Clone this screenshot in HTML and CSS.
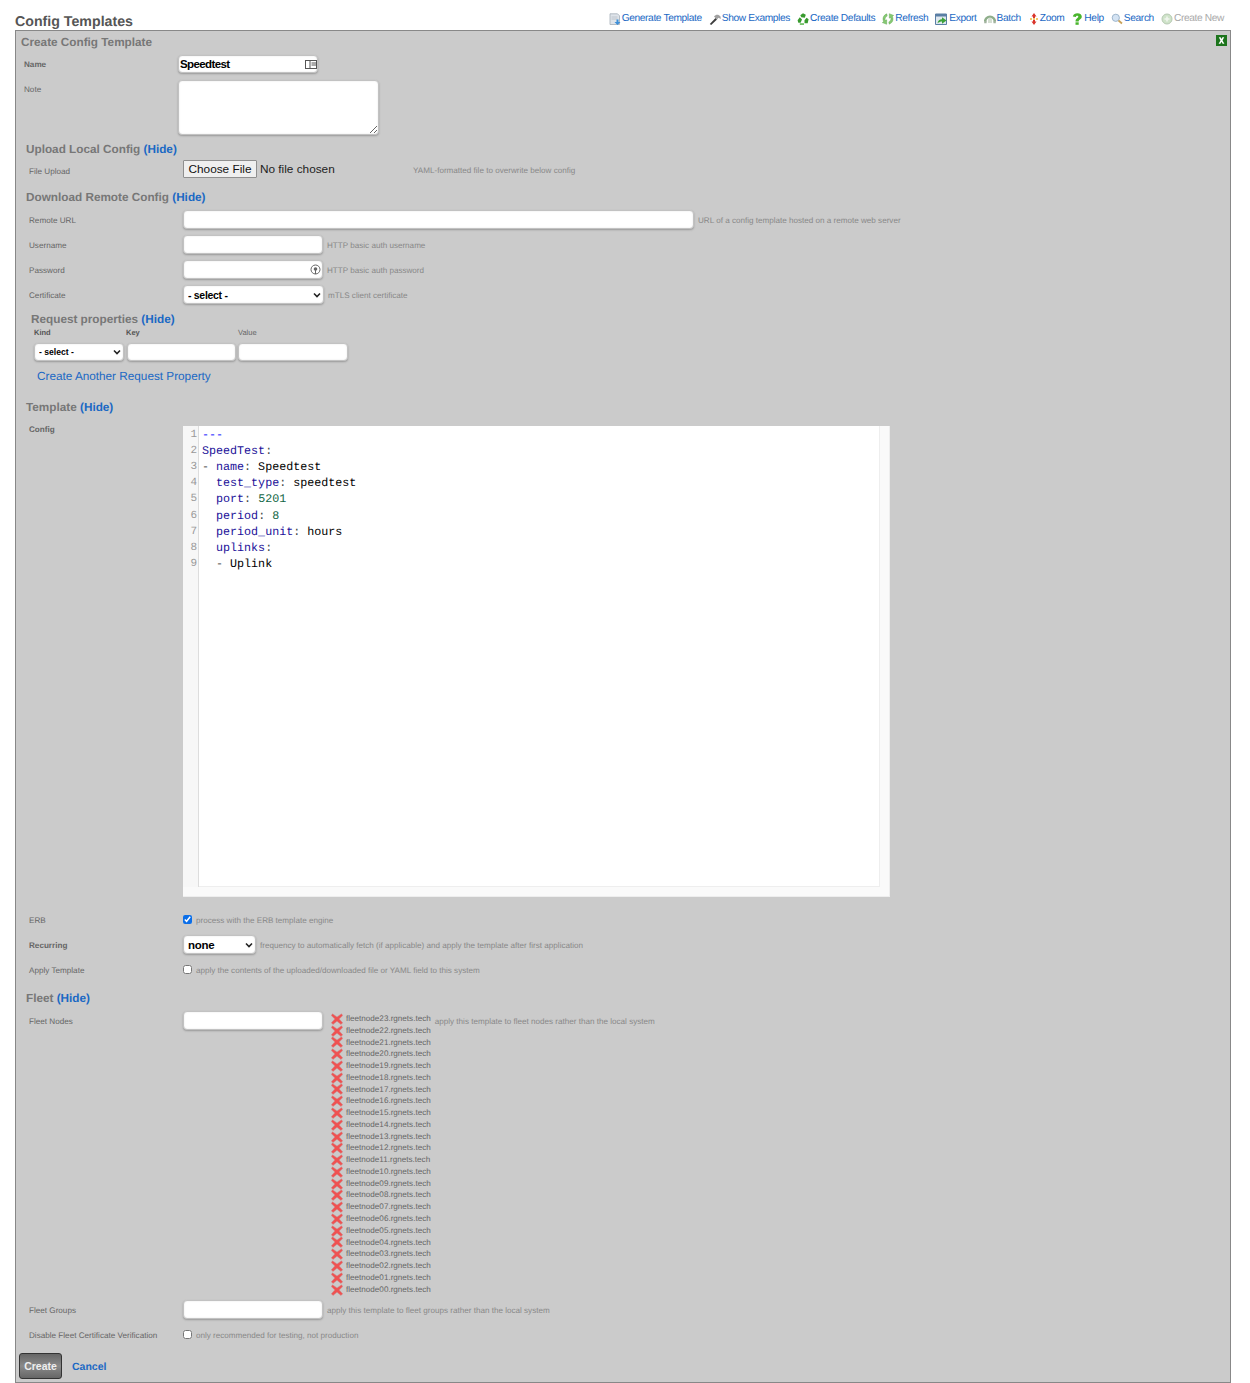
FILE: index.html
```html
<!DOCTYPE html>
<html lang="en">
<head>
<meta charset="utf-8">
<title>Config Templates</title>
<link rel="stylesheet" href="styles.css">
</head>
<body>
<svg class="defs" aria-hidden="true">
  <symbol id="x" viewBox="0 0 12 12"><path d="M1.500 .8 L6 4 L10.500 .8 L11.700 2.500 L8.200 6 L11.700 9.800 L10 11.500 L6 8.200 L2 11.500 L.3 9.800 L3.800 6 L.3 2.500 Z" fill="#ef5252" stroke="#c98e8e" stroke-width=".5"/></symbol>
</svg>
<header class="top">
  <h1 class="page-title">Config Templates</h1>
  <nav class="tools">
    <a href="#"><svg class="ic" viewBox="0 0 12 12"><path d="M1 .8h7.500l2 2v8.700H1z" fill="#dfe4ea" stroke="#a5aeb8" stroke-width=".8"/><path d="M2.500 4h6M2.500 6h6" stroke="#b5bcc6" stroke-width=".8"/><path d="M7.500 6.500v2.500H5.500L8.500 12 11.500 9H9.500V6.500z" fill="#3d8fd8"/></svg>Generate Template</a>
    <a href="#"><svg class="ic" viewBox="0 0 12 12"><path d="M.8 11L6.500 5 8 6.500 2.200 12z" fill="#3c3c3c"/><path d="M5 3.500C7 1 9.500 1 11.500 3.500L11.800 6 9.500 4.800 8 6.500 6.500 5z" fill="#a0a0a0"/></svg>Show Examples</a>
    <a href="#"><svg class="ic" viewBox="0 0 12 12"><path d="M6 .3L8.800 1.800 7.800 4.700 4.300 4.200 3.300 2.300zM.6 7.200L2.800 4.300 5 6.500 3.600 9.800 1.300 9.800zM11.600 6.300L10.700 10.200H7.500V7.300L9.600 4.700z" fill="#389a2e"/><path d="M2.800 10.300h4.200v1.500H2.800z" fill="#55b548"/></svg>Create Defaults</a>
    <a href="#"><svg class="ic" viewBox="0 0 12 12"><path d="M4.800.8C1.300 2.200.2 5.500 1.600 8.500L.3 9.600l4.400 1.700V6.800L3.400 7.600C2.600 5.800 3.200 4 5.200 3.100zM7.200 11.200c3.500-1.400 4.600-4.700 3.200-7.700L11.700 2.400 7.300.7V5.200l1.300-.8c.8 1.800.2 3.600-1.800 4.500z" fill="#86c972" stroke="#55a048" stroke-width=".4"/></svg>Refresh</a>
    <a href="#" class="a-export"><svg class="ic" viewBox="0 0 12 12"><path d="M.5 1h11v10.500H.5z" fill="#dfe7ef" stroke="#5a7fa5"/><path d="M.5 1h11v2.500H.5z" fill="#5a7fa5"/><path d="M2.500 10.300C3 7.500 4.500 6.300 7 6.300V4.300L11.500 7.500 7 10.700V8.500C5.500 8.500 4 9 2.500 10.300z" fill="#3da23a"/></svg>Export</a>
    <a href="#"><svg class="ic" viewBox="0 0 12 12"><path d="M1.200 8.500A4.800 4.800 0 0 1 10.800 8.500" fill="none" stroke="#8fae8b" stroke-width="2.600"/><path d="M4 10V6.500a2 2 0 0 1 4 0V10z" fill="#d5ded2"/><path d="M.2 8h2.400v2.300H.2zM9.400 8h2.400v2.300H9.400z" fill="#a3b3a0"/></svg>Batch</a>
    <a href="#" class="a-zoom"><svg class="ic" viewBox="0 0 12 12"><path d="M6 0L8.500 3.500H7V5H5V3.500H3.500zM6 12L8.500 8.500H7V7H5V8.500H3.500z" fill="#d9342b"/><path d="M2 5.300h2v1.400H2zM8 5.300h2v1.400H8zM5 5.300h2v1.400H5z" fill="#f0b63c"/></svg>Zoom</a>
    <a href="#"><svg class="ic" viewBox="0 0 12 12"><path d="M1.800 3.500C2.300 1 4.500.2 6.300.2 9.300.2 10.800 1.900 10.800 3.700 10.800 6.300 7.700 6.300 7.700 8.400H4.500C4.500 5.300 7.300 5 7.300 3.700 7.300 3 6.800 2.700 6.200 2.700 5.500 2.700 5 3.100 4.900 4.100z" fill="#49b52c"/><path d="M4.500 9.300h3.200v2.500H4.500z" fill="#49b52c"/></svg>Help</a>
    <a href="#"><svg class="ic" viewBox="0 0 12 12"><circle cx="4.800" cy="4.800" r="3.600" fill="#d4e3f3" stroke="#9db5cc"/><path d="M7.500 7.500L11 10.500" stroke="#c9a25a" stroke-width="1.800"/></svg>Search</a>
    <a href="#" class="off"><svg class="ic" viewBox="0 0 12 12"><circle cx="6" cy="6" r="5" fill="#cfe3c9" stroke="#b6c9b2"/><path d="M3.500 6h5M6 3.500v5" stroke="#f1f6ef" stroke-width="1.600"/></svg>Create New</a>
  </nav>
</header>

<main class="panel">
  <div class="panel-head">
    <h2 class="panel-title">Create Config Template</h2>
    <svg class="excel" viewBox="0 0 11 11"><rect width="11" height="11" fill="#1c741c"/><path d="M2.800 2.300h1.800l.9 1.700.9-1.700h1.800L6.500 5.500 8.400 8.700H6.600l-1.100-1.900-1.100 1.900H2.600l1.900-3.200z" fill="#fff"/></svg>
  </div>

  <div class="row row-top row-name">
    <label class="label strong">Name</label>
    <div class="name-box"><input class="input input-name" type="text" value="Speedtest">
      <svg class="name-ic" viewBox="0 0 12 9"><rect x=".5" y=".5" width="11" height="8" fill="#fff" stroke="#555"/><path d="M5 1v7" stroke="#555"/><path d="M6.500 3h4.500M6.500 5h4.500" stroke="#555" stroke-width="1"/></svg>
    </div>
  </div>
  <div class="row-note">
    <label class="label">Note</label>
    <textarea class="input note"></textarea>
  </div>

  <h3 class="section sec-upload">Upload Local Config <a href="#">(Hide)</a></h3>
  <div class="row row-file">
    <label class="label label-file">File Upload</label>
    <input class="file" type="file">
    <span class="hint hint-file">YAML-formatted file to overwrite below config</span>
  </div>

  <h3 class="section sec-download">Download Remote Config <a href="#">(Hide)</a></h3>
  <div class="row">
    <label class="label">Remote URL</label>
    <input class="input w-url" type="text">
    <span class="hint">URL of a config template hosted on a remote web server</span>
  </div>
  <div class="row">
    <label class="label">Username</label>
    <input class="input w-std" type="text">
    <span class="hint">HTTP basic auth username</span>
  </div>
  <div class="row">
    <label class="label">Password</label>
    <div class="pass-box"><input class="input w-std" type="password">
      <svg class="pass-ic" viewBox="0 0 11 11"><circle cx="5.500" cy="5.500" r="4.500" fill="none" stroke="#666"/><circle cx="5.500" cy="5" r="1.800" fill="#666"/><path d="M5.500 6v4" stroke="#666"/></svg>
    </div>
    <span class="hint">HTTP basic auth password</span>
  </div>
  <div class="row">
    <label class="label">Certificate</label>
    <select class="input sel sel-cert"><option>- select -</option></select>
    <span class="hint">mTLS client certificate</span>
  </div>

  <div class="props">
    <h3 class="section props-title">Request properties <a href="#">(Hide)</a></h3>
    <div class="kv kv-labels">
      <span class="kv-kind strong">Kind</span>
      <span class="kv-key strong">Key</span>
      <span class="kv-val">Value</span>
    </div>
    <div class="kv kv-inputs">
      <select class="input sel sel-kind"><option>- select -</option></select>
      <input class="input w-key" type="text">
      <input class="input w-val" type="text">
    </div>
    <a class="another" href="#">Create Another Request Property</a>
  </div>

  <h3 class="section sec-template">Template <a href="#">(Hide)</a></h3>
  <div class="row-config">
    <label class="label strong">Config</label>
    <div class="editor">
      <div class="editor-body">
        <div class="gutter">
          <span>1</span><span>2</span><span>3</span><span>4</span><span>5</span><span>6</span><span>7</span><span>8</span><span>9</span>
        </div>
        <pre class="code"><span class="def">---</span>
<span class="atom">SpeedTest</span><span class="meta">:</span>
<span class="meta">-</span> <span class="atom">name</span><span class="meta">:</span> Speedtest
  <span class="atom">test_type</span><span class="meta">:</span> speedtest
  <span class="atom">port</span><span class="meta">:</span> <span class="num">5201</span>
  <span class="atom">period</span><span class="meta">:</span> <span class="num">8</span>
  <span class="atom">period_unit</span><span class="meta">:</span> hours
  <span class="atom">uplinks</span><span class="meta">:</span>
  <span class="meta">-</span> Uplink</pre>
        <div class="vtrack"></div>
      </div>
      <div class="htrack"></div>
    </div>
  </div>

  <div class="row row-erb">
    <label class="label">ERB</label>
    <input class="check" type="checkbox" checked>
    <span class="hint">process with the ERB template engine</span>
  </div>
  <div class="row">
    <label class="label strong">Recurring</label>
    <select class="input sel sel-none"><option>none</option></select>
    <span class="hint">frequency to automatically fetch (if applicable) and apply the template after first application</span>
  </div>
  <div class="row">
    <label class="label">Apply Template</label>
    <input class="check" type="checkbox">
    <span class="hint">apply the contents of the uploaded/downloaded file or YAML field to this system</span>
  </div>

  <h3 class="section sec-fleet">Fleet <a href="#">(Hide)</a></h3>
  <div class="row-nodes">
    <label class="label nodes-label">Fleet Nodes</label>
    <input class="input w-std" type="text">
    <ul class="nodes">
      <li><svg class="x"><use href="#x"/></svg>fleetnode23.rgnets.tech</li>
      <li><svg class="x"><use href="#x"/></svg>fleetnode22.rgnets.tech</li>
      <li><svg class="x"><use href="#x"/></svg>fleetnode21.rgnets.tech</li>
      <li><svg class="x"><use href="#x"/></svg>fleetnode20.rgnets.tech</li>
      <li><svg class="x"><use href="#x"/></svg>fleetnode19.rgnets.tech</li>
      <li><svg class="x"><use href="#x"/></svg>fleetnode18.rgnets.tech</li>
      <li><svg class="x"><use href="#x"/></svg>fleetnode17.rgnets.tech</li>
      <li><svg class="x"><use href="#x"/></svg>fleetnode16.rgnets.tech</li>
      <li><svg class="x"><use href="#x"/></svg>fleetnode15.rgnets.tech</li>
      <li><svg class="x"><use href="#x"/></svg>fleetnode14.rgnets.tech</li>
      <li><svg class="x"><use href="#x"/></svg>fleetnode13.rgnets.tech</li>
      <li><svg class="x"><use href="#x"/></svg>fleetnode12.rgnets.tech</li>
      <li><svg class="x"><use href="#x"/></svg>fleetnode11.rgnets.tech</li>
      <li><svg class="x"><use href="#x"/></svg>fleetnode10.rgnets.tech</li>
      <li><svg class="x"><use href="#x"/></svg>fleetnode09.rgnets.tech</li>
      <li><svg class="x"><use href="#x"/></svg>fleetnode08.rgnets.tech</li>
      <li><svg class="x"><use href="#x"/></svg>fleetnode07.rgnets.tech</li>
      <li><svg class="x"><use href="#x"/></svg>fleetnode06.rgnets.tech</li>
      <li><svg class="x"><use href="#x"/></svg>fleetnode05.rgnets.tech</li>
      <li><svg class="x"><use href="#x"/></svg>fleetnode04.rgnets.tech</li>
      <li><svg class="x"><use href="#x"/></svg>fleetnode03.rgnets.tech</li>
      <li><svg class="x"><use href="#x"/></svg>fleetnode02.rgnets.tech</li>
      <li><svg class="x"><use href="#x"/></svg>fleetnode01.rgnets.tech</li>
      <li><svg class="x"><use href="#x"/></svg>fleetnode00.rgnets.tech</li>
    </ul>
    <span class="hint hint-nodes">apply this template to fleet nodes rather than the local system</span>
  </div>
  <div class="row">
    <label class="label">Fleet Groups</label>
    <input class="input w-std" type="text">
    <span class="hint">apply this template to fleet groups rather than the local system</span>
  </div>
  <div class="row">
    <label class="label">Disable Fleet Certificate Verification</label>
    <input class="check" type="checkbox">
    <span class="hint">only recommended for testing, not production</span>
  </div>

  <div class="actions">
    <button class="btn" type="button">Create</button>
    <a class="cancel" href="#">Cancel</a>
  </div>
</main>
</body>
</html>
```

FILE: styles.css
```css
* { box-sizing: border-box; }
html, body { margin: 0; padding: 0; }
body {
  padding: 0 19px 0 15px;
  background: #fff;
  font-family: "Liberation Sans", Arial, sans-serif;
  color: #555;
  overflow: hidden;
  text-rendering: geometricPrecision;
}
a { color: #1a68c4; text-decoration: none; }
.defs { display: none; }

.top { display: flex; justify-content: space-between; align-items: flex-start; height: 30px; }
.page-title { margin: 14px 0 0; font-size: 14.2px; line-height: 16px; font-weight: bold; color: #555; }
.tools { display: flex; gap: 7px; margin-top: 12px; padding-right: 7px; font-size: 10.2px; line-height: 14px; letter-spacing: -.37px; }
.tools a { display: flex; align-items: center; white-space: nowrap; }
.tools a.off { color: #aaa; }
.ic { width: 12px; height: 12px; margin-right: 1px; flex: none; }
.a-export .ic { margin-right: 2px; }
.a-zoom .ic { margin-right: 0; }

.panel { height: 1353px; border: 1px solid #888; background: #cbcbcb; }
.panel-head { display: flex; justify-content: space-between; align-items: center; height: 21px; padding: 0 3px 0 5px; }
.panel-title { margin: 0; padding-top: 1px; font-size: 11.75px; font-weight: bold; color: #777; }
.excel { width: 11px; height: 11px; margin-bottom: 3px; }

.section { margin: 0; padding-left: 10px; height: 18px; font-size: 11.75px; line-height: 20px; font-weight: bold; color: #777; }

.row { display: flex; align-items: center; height: 25px; padding-left: 13px; }
.label { flex: none; width: 154px; padding-top: 2px; font-size: 8.15px; color: #666; }
.strong { font-weight: bold; }
.row-top, .row-note { padding-left: 8px; }
.row-name { height: 20px; margin-top: 2px; }
.row-name .label { padding-top: 0; }
.row-note { display: flex; margin-top: 6px; }
.row-note .label { padding-top: 0; margin-top: 5px; }
.hint { margin-left: 4px; padding-top: 2px; font-size: 8.1px; color: #888; white-space: nowrap; }

.input {
  display: block;
  height: 19px;
  padding: 0 2px;
  background: #fff;
  border: 1px solid #c2c2c2;
  border-radius: 4px;
  box-shadow: 0 1px 2px #999, inset 0 0 2px #e4e4e4;
  outline: 0;
  font-family: "Liberation Sans", Arial, sans-serif;
  color: #000;
}
.name-box { position: relative; }
.input-name { width: 140px; height: 18px; font-size: 11.5px; font-weight: bold; letter-spacing: -.6px; padding: 0 1px; }
.name-ic { position: absolute; top: 5px; right: 1px; width: 12px; height: 9px; }
.note { width: 201px; height: 55px; resize: both; }

.sec-upload { margin-top: 5px; }
.row-file { height: 20px; margin-top: 1px; }
.label-file { margin-top: 2px; }
.file { width: 230px; font-family: "Liberation Sans", Arial, sans-serif; font-size: 11.8px; color: #222; }
.file::file-selector-button { font-family: "Liberation Sans", Arial, sans-serif; font-size: 11.8px; height: 18px; padding: 0 4.5px; margin-right: 3px; background: #efefef; border: 1px solid #8f8f8f; border-radius: 1px; color: #111; }
.hint-file { margin: 0; }
.sec-download { margin-top: 9px; margin-bottom: 1px; }

.w-url { width: 511px; }
.w-std { width: 140px; }
.pass-box { position: relative; }
.pass-ic { position: absolute; top: 4px; right: 2px; width: 11px; height: 11px; }

.sel {
  appearance: none;
  padding: 0 0 0 4px;
  font-size: 10.5px;
  font-weight: bold;
  letter-spacing: -.3px;
  background: #fff url("data:image/svg+xml,%3Csvg xmlns='http://www.w3.org/2000/svg' width='8' height='6'%3E%3Cpath d='M1 1.500L4 4.500 7 1.500' fill='none' stroke='%23222' stroke-width='1.600'/%3E%3C/svg%3E") no-repeat right 2px center;
}
.sel-cert { width: 141px; }
.sel-kind { width: 90px; height: 18px; font-size: 8.6px; letter-spacing: 0; }
.sel-none { width: 73px; font-size: 11.5px; }

.props { padding-left: 15px; }
.props-title { padding-left: 0; height: 21px; line-height: 26px; }
.kv { display: flex; padding-left: 2px; }
.kv-labels { height: 9px; font-size: 7.5px; line-height: 9px; color: #555; }
.kv-kind { width: 93px; padding-left: 1px; }
.kv-key { width: 112px; }
.kv-val { color: #666; }
.kv-inputs { gap: 2.5px; margin-top: 6px; padding-left: 3px; }
.w-key { width: 109px; height: 18px; }
.w-val { width: 110px; height: 18px; }
.another { display: block; height: 18px; margin-top: 6px; padding-left: 6px; font-size: 11.75px; line-height: 20px; }

.sec-template { margin-top: 13px; }
.row-config { display: flex; margin-top: 10px; padding-left: 13px; }
.row-config .label { padding-top: 0; margin-top: -1px; line-height: 10px; }
.editor { display: flex; flex-direction: column; width: 707px; height: 471px; background: #fafafa; border: solid #eee; border-width: 0 1px 1px 0; }
.editor-body { display: flex; height: 461px; }
.gutter { flex: none; width: 16px; padding: .6px 1px 0 0; background: #f7f7f7; border-right: 1px solid #ddd; text-align: right; color: #999; font-family: "Liberation Mono", monospace; font-size: 11px; line-height: 16.2px; }
.gutter span { display: block; }
.code { flex: 1; margin: 0; padding: .6px 0 0 3px; background: #fff; border-bottom: 1px solid #eee; font-family: "Liberation Mono", monospace; font-size: 11.7px; line-height: 16.2px; color: #000; }
.vtrack { flex: none; width: 10px; background: #fafafa; border-left: 1px solid #eee; }
.htrack { flex: 1; }
.def { color: #0000ff; }
.atom { color: #221199; }
.meta { color: #444; }
.num { color: #116644; }

.row-erb { margin-top: 10px; }
.check { width: 9px; height: 9px; margin: 0 4px 0 0; accent-color: #0b6ee8; flex: none; }
.check + .hint { margin-left: 0; }

.sec-fleet { margin-top: 7px; }
.row-nodes { display: flex; align-items: flex-start; margin: 4px 0 2px; padding-left: 13px; }
.nodes-label { margin-top: 4px; }
.nodes { margin: 2px 0 0; padding: 0 0 0 8px; list-style: none; font-size: 8.12px; line-height: 11.77px; color: #666; }
.nodes li { display: flex; align-items: center; height: 11.77px; white-space: nowrap; }
.x { width: 12px; height: 12px; margin-right: 3px; flex: none; }
.hint-nodes { margin-top: 4px; }

.actions { display: flex; align-items: center; gap: 10px; margin-top: 6px; padding-left: 3px; }
.btn { width: 43px; height: 26px; padding: 0; background: linear-gradient(#666, #8a8a8a 50%, #666); border: 1px solid #333; border-radius: 3px; color: #eee; font-family: "Liberation Sans", Arial, sans-serif; font-size: 10.5px; font-weight: bold; }
.cancel { padding-top: 2px; font-size: 10.5px; font-weight: bold; }
```
